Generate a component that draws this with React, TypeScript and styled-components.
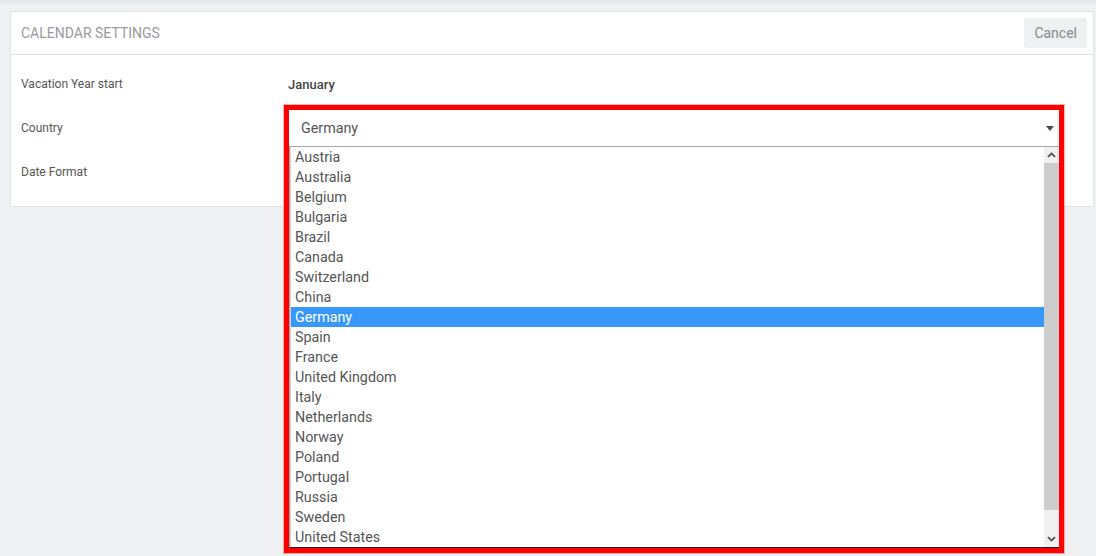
import React from "react";
import styled, { createGlobalStyle } from "styled-components";

const GlobalStyle = createGlobalStyle`
  html, body {
    margin: 0;
    padding: 0;
  }
  body {
    width: 1096px;
    height: 556px;
    overflow: hidden;
    background: linear-gradient(#e3e4e6 0px, #eceef0 4px, #eff0f2 6px);
    font-family: Roboto, "Liberation Sans", Arial, sans-serif;
  }
`;

const Page = styled.div`
  padding: 11px 2px 0 10px;
`;

const Card = styled.section`
  background: #fff;
  border: 1px solid #e1e3e6;
`;

const Header = styled.header`
  height: 42px;
  display: flex;
  align-items: center;
  justify-content: space-between;
  padding: 0 6px 0 10px;
  border-bottom: 1px solid #e1e3e6;
`;

const Title = styled.h2`
  margin: 0;
  font-size: 14px;
  font-weight: 400;
  color: #9a9a9c;
  text-transform: uppercase;
`;

const CancelButton = styled.button`
  height: 30px;
  padding: 0 10px;
  border: none;
  border-radius: 3px;
  background: #eff0f2;
  color: #888a8e;
  font-family: Roboto, "Liberation Sans", Arial, sans-serif;
  font-size: 14px;
`;

const Body = styled.div`
  padding: 7px 29px 12px 10px;
`;

const Row = styled.div<{ $h: number }>`
  display: grid;
  grid-template-columns: 263px 1fr;
  align-items: center;
  height: ${(p) => p.$h}px;
`;

const Label = styled.div`
  font-size: 12px;
  color: #555;
`;

const Value = styled.div`
  position: relative;
  height: 100%;
  display: flex;
  align-items: center;
  padding-left: 4px;
  padding-top: 1px;
  box-sizing: border-box;
  font-size: 13px;
  font-weight: 500;
  color: #444;
`;

const Annotation = styled.div`
  position: absolute;
  top: 0;
  left: 0;
  right: 0;
  z-index: 5;
  border: 5px solid #ff0000;
  box-shadow: 0 0 0 1px rgba(255, 80, 80, 0.45);
  background: #fff;
  display: flex;
  flex-direction: column;
`;

const SelectField = styled.div`
  height: 36px;
  display: flex;
  align-items: center;
  justify-content: space-between;
  padding: 0 5px 0 12px;
  font-size: 14.3px;
  font-weight: 400;
  color: #555;
`;

const Caret = styled.span`
  width: 0;
  height: 0;
  border-left: 4px solid transparent;
  border-right: 4px solid transparent;
  border-top: 5px solid #4a4a4a;
`;

const ListBox = styled.div`
  display: flex;
  border-top: 1px solid #a6a6a6;
  border-left: 1px solid #a3a3a3;
  border-bottom: 1px solid #222;
`;

const Items = styled.ul`
  flex: 1;
  margin: 0;
  padding: 0;
  list-style: none;
  border-left: 1px solid #d4d4d4;
`;

const Item = styled.li<{ $selected?: boolean }>`
  height: 20px;
  line-height: 20px;
  padding-left: 4px;
  font-size: 14.3px;
  font-weight: 400;
  color: ${(p) => (p.$selected ? "#fff" : "#555")};
  background: ${(p) => (p.$selected ? "#3898fa" : "transparent")};
`;

const ScrollBar = styled.div`
  width: 15px;
  display: flex;
  flex-direction: column;
  background: #f0f0f0;
`;

const ScrollButton = styled.div`
  height: 16px;
  display: flex;
  align-items: center;
  justify-content: center;
`;

const Thumb = styled.div`
  height: 347px;
  background: #cdcdcd;
`;

const Track = styled.div`
  flex: 1;
`;

const Chevron = ({ down }: { down?: boolean }) => (
  <svg width="9" height="6" viewBox="0 0 9 6">
    <path
      d={down ? "M1 1.2 L4.5 4.6 L8 1.2" : "M1 4.8 L4.5 1.4 L8 4.8"}
      fill="none"
      stroke="#505050"
      strokeWidth="1.8"
    />
  </svg>
);

const countries = [
  "Austria",
  "Australia",
  "Belgium",
  "Bulgaria",
  "Brazil",
  "Canada",
  "Switzerland",
  "China",
  "Germany",
  "Spain",
  "France",
  "United Kingdom",
  "Italy",
  "Netherlands",
  "Norway",
  "Poland",
  "Portugal",
  "Russia",
  "Sweden",
  "United States",
];

export default function App() {
  return (
    <>
      <GlobalStyle />
      <Page>
        <Card>
          <Header>
            <Title>Calendar Settings</Title>
            <CancelButton>Cancel</CancelButton>
          </Header>
          <Body>
            <Row $h={43}>
              <Label>Vacation Year start</Label>
              <Value>January</Value>
            </Row>
            <Row $h={45}>
              <Label>Country</Label>
              <Value>
                <Annotation>
                  <SelectField>
                    <span>Germany</span>
                    <Caret />
                  </SelectField>
                  <ListBox>
                    <Items>
                      {countries.map((c) => (
                        <Item key={c} $selected={c === "Germany"}>
                          {c}
                        </Item>
                      ))}
                    </Items>
                    <ScrollBar>
                      <ScrollButton>
                        <Chevron />
                      </ScrollButton>
                      <Thumb />
                      <Track />
                      <ScrollButton>
                        <Chevron down />
                      </ScrollButton>
                    </ScrollBar>
                  </ListBox>
                </Annotation>
              </Value>
            </Row>
            <Row $h={44}>
              <Label>Date Format</Label>
              <Value />
            </Row>
          </Body>
        </Card>
      </Page>
    </>
  );
}
